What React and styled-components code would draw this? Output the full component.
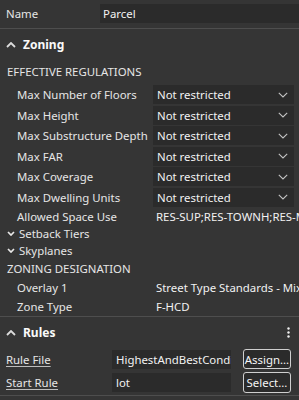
import React from 'react';
import styled, { createGlobalStyle } from 'styled-components';

const GlobalStyle = createGlobalStyle`
  html, body {
    margin: 0;
    background: #353535;
  }
  body {
    font-family: "Noto Sans", "Open Sans", sans-serif;
    font-size: 11.4px;
    color: #e6e6e6;
    overflow: hidden;
  }
`;

const Panel = styled.div`
  width: 299px;
  height: 400px;
  overflow: hidden;
  display: flex;
  flex-direction: column;
`;

const NameRow = styled.div`
  height: 29px;
  flex: none;
  box-sizing: border-box;
  display: flex;
  align-items: flex-start;
  padding: 4px 0 0 6px;
  border-bottom: 1px solid #4e4e4e;
`;

const NameLabel = styled.span`
  width: 94px;
  line-height: 19px;
`;

const TextBox = styled.div`
  height: 19px;
  line-height: 19px;
  background: #2b2b2b;
  color: #f2f2f2;
  padding-left: ${p => p.$pad || 3}px;
  white-space: nowrap;
  overflow: hidden;
  flex: ${p => (p.$width ? 'none' : 1)};
  width: ${p => (p.$width ? `${p.$width}px` : 'auto')};
  box-sizing: border-box;
`;

const SectionHeader = styled.div`
  height: ${p => p.$h}px;
  flex: none;
  display: flex;
  align-items: center;
  padding-left: 6px;
  font-weight: 700;
  font-size: 12px;
  color: #fafafa;
  gap: 7px;
`;

const Kebab = styled.span`
  margin-left: auto;
  margin-right: 9px;
  display: flex;
`;

const SubHeading = styled.div`
  height: ${p => p.$h}px;
  flex: none;
  display: flex;
  align-items: center;
  padding-left: 7px;
  color: #e6e6e6;
`;

const DropList = styled.div`
  display: flex;
  flex-direction: column;
  gap: 1.5px;
  margin-top: 3px;
`;

const Row = styled.div`
  height: ${p => p.$h || 19}px;
  flex: none;
  display: flex;
  align-items: center;
  margin-top: ${p => p.$top || 0}px;
`;

const Label = styled.span`
  width: 153px;
  flex: none;
  padding-left: ${p => p.$indent || 17}px;
  box-sizing: border-box;
  white-space: nowrap;
  display: flex;
  align-items: center;
  gap: 4px;
  color: #e6e6e6;
`;

const Dropdown = styled.div`
  width: 141px;
  height: 19px;
  background: #2b2b2b;
  display: flex;
  align-items: center;
  justify-content: space-between;
  padding: 0 6px 0 4px;
  box-sizing: border-box;
  color: #f2f2f2;
`;

const Value = styled.span`
  padding-left: 3px;
  white-space: nowrap;
  overflow: hidden;
  flex: 1;
  color: #f2f2f2;
`;

const Divider = styled.div`
  height: 1px;
  flex: none;
  background: #4e4e4e;
  margin-top: ${p => p.$top || 0}px;
`;

const LinkLabel = styled.span`
  width: 112px;
  flex: none;
  padding-left: 6px;
  box-sizing: border-box;
  text-decoration: underline;
  text-decoration-color: #bdbdbd;
  text-underline-offset: 2px;
  color: #e6e6e6;
`;

const RuleRow = styled.div`
  height: ${p => p.$h}px;
  flex: none;
  display: flex;
  align-items: center;
`;

const Button = styled.button`
  margin-left: 12px;
  width: 48px;
  height: ${p => p.$h || 20}px;
  border: 1.5px solid #cfcfcf;
  border-radius: 3px;
  background: #2b2b2b;
  color: #f5f5f5;
  font: inherit;
  padding: 0;
  box-sizing: border-box;
  white-space: nowrap;
`;

const ChevronUp = () => (
  <svg width="10" height="6" viewBox="0 0 10 6">
    <path d="M1 5 L5 1 L9 5" fill="none" stroke="#dcdcdc" strokeWidth="1.8" />
  </svg>
);

const ChevronSmall = () => (
  <svg width="8" height="5" viewBox="0 0 8 5">
    <path d="M1 1 L4 4 L7 1" fill="none" stroke="#e8e8e8" strokeWidth="1.7" />
  </svg>
);

const DropChevron = () => (
  <svg width="10" height="6" viewBox="0 0 10 6">
    <path d="M0.8 0.8 L5 5 L9.2 0.8" fill="none" stroke="#c4c4c4" strokeWidth="1.1" />
  </svg>
);

const DotsIcon = () => (
  <svg width="3" height="11" viewBox="0 0 3 11">
    <circle cx="1.5" cy="1.5" r="1.2" fill="#f0f0f0" />
    <circle cx="1.5" cy="5.5" r="1.2" fill="#f0f0f0" />
    <circle cx="1.5" cy="9.5" r="1.2" fill="#f0f0f0" />
  </svg>
);

const regulations = [
  'Max Number of Floors',
  'Max Height',
  'Max Substructure Depth',
  'Max FAR',
  'Max Coverage',
  'Max Dwelling Units',
];

export default function App() {
  return (
    <Panel>
      <GlobalStyle />
      <NameRow>
        <NameLabel>Name</NameLabel>
        <TextBox>Parcel</TextBox>
      </NameRow>

      <SectionHeader $h={31}>
        <ChevronUp />
        <span>Zoning</span>
      </SectionHeader>
      <SubHeading $h={22}>EFFECTIVE REGULATIONS</SubHeading>
      <DropList>
        {regulations.map(r => (
          <Row key={r}>
            <Label>{r}</Label>
            <Dropdown>
              <span>Not restricted</span>
              <DropChevron />
            </Dropdown>
          </Row>
        ))}
      </DropList>
      <Row $h={17.5} $top={1}>
        <Label>Allowed Space Use</Label>
        <Value>RES-SUP;RES-TOWNH;RES-MULTI</Value>
      </Row>
      <Row $h={17}>
        <Label $indent={7}>
          <ChevronSmall />
          Setback Tiers
        </Label>
      </Row>
      <Row $h={17}>
        <Label $indent={7}>
          <ChevronSmall />
          Skyplanes
        </Label>
      </Row>
      <SubHeading $h={18.5}>ZONING DESIGNATION</SubHeading>
      <Row $h={20}>
        <Label>Overlay 1</Label>
        <Value>Street Type Standards - Mixed Use</Value>
      </Row>
      <Row $h={17}>
        <Label>Zone Type</Label>
        <Value>F-HCD</Value>
      </Row>
      <Divider $top={1.5} />

      <SectionHeader $h={31}>
        <ChevronUp />
        <span>Rules</span>
        <Kebab>
          <DotsIcon />
        </Kebab>
      </SectionHeader>
      <RuleRow $h={22}>
        <LinkLabel>Rule File</LinkLabel>
        <TextBox $width={119} $pad={4}>HighestAndBestConditions</TextBox>
        <Button>Assign...</Button>
      </RuleRow>
      <RuleRow $h={24}>
        <LinkLabel>Start Rule</LinkLabel>
        <TextBox $width={119} $pad={4}>lot</TextBox>
        <Button $h={21}>Select...</Button>
      </RuleRow>
      <Divider $top={1} />
    </Panel>
  );
}
